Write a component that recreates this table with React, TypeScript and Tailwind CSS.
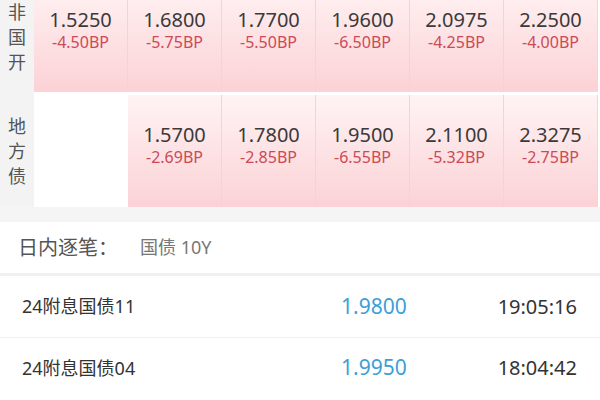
const ROWS = [
  {
    label: ["非", "国", "开"],
    cells: [
      { rate: "1.5250", bp: "-4.50BP" },
      { rate: "1.6800", bp: "-5.75BP" },
      { rate: "1.7700", bp: "-5.50BP" },
      { rate: "1.9600", bp: "-6.50BP" },
      { rate: "2.0975", bp: "-4.25BP" },
      { rate: "2.2500", bp: "-4.00BP" },
    ],
  },
  {
    label: ["地", "方", "债"],
    cells: [
      null,
      { rate: "1.5700", bp: "-2.69BP" },
      { rate: "1.7800", bp: "-2.85BP" },
      { rate: "1.9500", bp: "-6.55BP" },
      { rate: "2.1100", bp: "-5.32BP" },
      { rate: "2.3275", bp: "-2.75BP" },
    ],
  },
];

const TRADES = [
  { name: "24附息国债11", rate: "1.9800", time: "19:05:16" },
  { name: "24附息国债04", rate: "1.9950", time: "18:04:42" },
];

const FONT = {
  fontFamily: '"Noto Sans", "Noto Sans CJK SC", sans-serif',
};

export default function App() {
  return (
    <div className="h-[400px] w-[600px] overflow-hidden bg-white" style={FONT}>
      <div className="-mt-[20px]">
        {ROWS.map((row, rowIndex) => (
          <div
            key={rowIndex}
            className={`grid grid-cols-[34px_repeat(6,94px)] ${
              rowIndex > 0 ? "h-[115px]" : "h-[112px]"
            }`}
          >
            <div className="flex flex-col items-center justify-center gap-[3px] bg-[#f3f3f3] pt-[2px] text-[18px] leading-[22px] text-[#555]">
              {row.label.map((ch) => (
                <span key={ch}>{ch}</span>
              ))}
            </div>
            {row.cells.map((cell, cellIndex) =>
              cell ? (
                <div
                  key={cellIndex}
                  className={`flex flex-col items-center justify-center gap-[1px] border-r border-[#f3d3d6] bg-gradient-to-b from-[#fff3f4] to-[#fbd2d6] pb-[12px] ${
                    rowIndex > 0 ? "mt-[3px]" : ""
                  }`}
                >
                  <span className="text-[20px] leading-[22px] text-[#3a3a3a]">
                    {cell.rate}
                  </span>
                  <span className="text-[16px] leading-[20px] text-[#cc4a55]">
                    {cell.bp}
                  </span>
                </div>
              ) : (
                <div key={cellIndex} className="bg-white" />
              )
            )}
          </div>
        ))}
      </div>
      <div className="h-[15px] bg-[#f5f5f5]" />
      <div className="flex h-[54px] items-center border-b-[3px] border-[#f0f0f0] pl-[18px]">
        <span className="text-[20px] text-[#555]">日内逐笔：</span>
        <span className="ml-[22px] text-[18px] text-[#777]">国债 10Y</span>
      </div>
      {TRADES.map((trade, index) => (
        <div
          key={trade.name}
          className={`flex h-[61px] items-center pl-[22px] pr-[23px] ${
            index > 0 ? "border-t border-[#f0f0f0]" : ""
          }`}
        >
          <span className="w-[319px] text-[18px] text-[#333]">{trade.name}</span>
          <span className="text-[21px] text-[#3d9fd6]">{trade.rate}</span>
          <span className="ml-auto text-[20px] text-[#333]">{trade.time}</span>
        </div>
      ))}
    </div>
  );
}
